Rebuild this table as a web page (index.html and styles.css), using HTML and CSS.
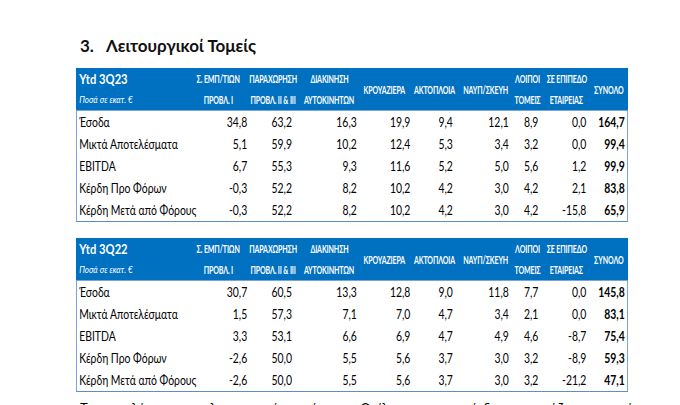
FILE: index.html
```html
<!DOCTYPE html>
<html lang="el">
<head>
<meta charset="utf-8">
<title>Λειτουργικοί Τομείς</title>
<link rel="stylesheet" href="styles.css">
</head>
<body>
<div class="page">
  <h2 class="title"><span class="num">3.</span>Λειτουργικοί Τομείς</h2>

  <div class="tbl">
    <div class="hdr">
      <div class="h first"><span class="ytd">Ytd 3Q23</span><span class="unit">Ποσά σε εκατ. €</span></div>
      <div class="h"><span class="c">Σ. ΕΜΠ/ΤΙΩΝ</span><span class="c">ΠΡΟΒΛ. Ι</span></div>
      <div class="h"><span class="c">ΠΑΡΑΧΩΡΗΣΗ</span><span class="c">ΠΡΟΒΛ. ΙΙ &amp; ΙΙΙ</span></div>
      <div class="h"><span class="c">ΔΙΑΚΙΝΗΣΗ</span><span class="c">ΑΥΤΟΚΙΝΗΤΩΝ</span></div>
      <div class="h"><span class="c">ΚΡΟΥΑΖΙΕΡΑ</span></div>
      <div class="h"><span class="c">ΑΚΤΟΠΛΟΙΑ</span></div>
      <div class="h"><span class="c">ΝΑΥΠ/ΣΚΕΥΗ</span></div>
      <div class="h"><span class="c">ΛΟΙΠΟΙ</span><span class="c">ΤΟΜΕΙΣ</span></div>
      <div class="h"><span class="c">ΣΕ ΕΠΙΠΕΔΟ</span><span class="c">ΕΤΑΙΡΕΙΑΣ</span></div>
      <div class="h"><span class="c">ΣΥΝΟΛΟ</span></div>
    </div>
    <div class="body">
      <div class="row"><div class="lbl">Έσοδα</div><div>34,8</div><div>63,2</div><div>16,3</div><div>19,9</div><div>9,4</div><div>12,1</div><div>8,9</div><div>0,0</div><div class="tot">164,7</div></div>
      <div class="row"><div class="lbl">Μικτά Αποτελέσματα</div><div>5,1</div><div>59,9</div><div>10,2</div><div>12,4</div><div>5,3</div><div>3,4</div><div>3,2</div><div>0,0</div><div class="tot">99,4</div></div>
      <div class="row"><div class="lbl">EBITDA</div><div>6,7</div><div>55,3</div><div>9,3</div><div>11,6</div><div>5,2</div><div>5,0</div><div>5,6</div><div>1,2</div><div class="tot">99,9</div></div>
      <div class="row"><div class="lbl">Κέρδη Προ Φόρων</div><div>-0,3</div><div>52,2</div><div>8,2</div><div>10,2</div><div>4,2</div><div>3,0</div><div>4,2</div><div>2,1</div><div class="tot">83,8</div></div>
      <div class="row"><div class="lbl">Κέρδη Μετά από Φόρους</div><div>-0,3</div><div>52,2</div><div>8,2</div><div>10,2</div><div>4,2</div><div>3,0</div><div>4,2</div><div>-15,8</div><div class="tot">65,9</div></div>
    </div>
  </div>

  <div class="tbl second">
    <div class="hdr">
      <div class="h first"><span class="ytd">Ytd 3Q22</span><span class="unit">Ποσά σε εκατ. €</span></div>
      <div class="h"><span class="c">Σ. ΕΜΠ/ΤΙΩΝ</span><span class="c">ΠΡΟΒΛ. Ι</span></div>
      <div class="h"><span class="c">ΠΑΡΑΧΩΡΗΣΗ</span><span class="c">ΠΡΟΒΛ. ΙΙ &amp; ΙΙΙ</span></div>
      <div class="h"><span class="c">ΔΙΑΚΙΝΗΣΗ</span><span class="c">ΑΥΤΟΚΙΝΗΤΩΝ</span></div>
      <div class="h"><span class="c">ΚΡΟΥΑΖΙΕΡΑ</span></div>
      <div class="h"><span class="c">ΑΚΤΟΠΛΟΙΑ</span></div>
      <div class="h"><span class="c">ΝΑΥΠ/ΣΚΕΥΗ</span></div>
      <div class="h"><span class="c">ΛΟΙΠΟΙ</span><span class="c">ΤΟΜΕΙΣ</span></div>
      <div class="h"><span class="c">ΣΕ ΕΠΙΠΕΔΟ</span><span class="c">ΕΤΑΙΡΕΙΑΣ</span></div>
      <div class="h"><span class="c">ΣΥΝΟΛΟ</span></div>
    </div>
    <div class="body">
      <div class="row"><div class="lbl">Έσοδα</div><div>30,7</div><div>60,5</div><div>13,3</div><div>12,8</div><div>9,0</div><div>11,8</div><div>7,7</div><div>0,0</div><div class="tot">145,8</div></div>
      <div class="row"><div class="lbl">Μικτά Αποτελέσματα</div><div>1,5</div><div>57,3</div><div>7,1</div><div>7,0</div><div>4,7</div><div>3,4</div><div>2,1</div><div>0,0</div><div class="tot">83,1</div></div>
      <div class="row"><div class="lbl">EBITDA</div><div>3,3</div><div>53,1</div><div>6,6</div><div>6,9</div><div>4,7</div><div>4,9</div><div>4,6</div><div>-8,7</div><div class="tot">75,4</div></div>
      <div class="row"><div class="lbl">Κέρδη Προ Φόρων</div><div>-2,6</div><div>50,0</div><div>5,5</div><div>5,6</div><div>3,7</div><div>3,0</div><div>3,2</div><div>-8,9</div><div class="tot">59,3</div></div>
      <div class="row"><div class="lbl">Κέρδη Μετά από Φόρους</div><div>-2,6</div><div>50,0</div><div>5,5</div><div>5,6</div><div>3,7</div><div>3,0</div><div>3,2</div><div>-21,2</div><div class="tot">47,1</div></div>
    </div>
  </div>

  <p class="note">Τα αποτελέσματα των λειτουργικών τομέων του Ομίλου για την περίοδο παρουσιάζονται ανωτέρω.</p>
</div>
</body>
</html>
```

FILE: styles.css
```css
html, body {
  margin: 0;
  padding: 0;
  background: #ffffff;
}

body {
  width: 680px;
  height: 405px;
  overflow: hidden;
  font-family: Lato, "Open Sans", "Liberation Sans", sans-serif;
  color: #000000;
}

.page {
  padding: 36px 0 0 76px;
}

.title {
  margin: 0 0 12px 4px;
  font-family: Lato, "Open Sans", "Liberation Sans", sans-serif;
  font-size: 17px;
  font-weight: bold;
  line-height: 20px;
  color: #111111;
}

.title .num {
  display: inline-block;
  width: 26px;
}

/* the table is a horizontally compressed picture in the source document */
.tbl {
  width: 690px;
  transform: scaleX(0.8);
  transform-origin: 0 0;
}

.tbl.second {
  margin-top: 16px;
}

.hdr,
.row {
  display: grid;
  grid-template-columns: 142px 72px 65px 75px 63px 63px 65px 38px 60px 47px;
}

.hdr {
  background: #0070c0;
  color: #ffffff;
  height: 42px;
}

.h {
  display: flex;
  flex-direction: column;
  justify-content: center;
  align-items: center;
  font-size: 11px;
  font-weight: bold;
  line-height: 21px;
  white-space: nowrap;
}

.h .c {
  display: inline-block;
  transform: scaleX(0.8);
  letter-spacing: -0.2px;
}

.h.first {
  align-items: flex-start;
  padding-left: 4px;
}

.h .ytd {
  font-size: 14px;
  font-weight: bold;
}

.h .unit {
  font-size: 10px;
  font-weight: normal;
  font-style: italic;
}

.body {
  border: 1px solid #5a8fc9;
  border-top: 1px solid #7aa6d6;
}

.row {
  height: 22px;
  line-height: 22px;
  font-size: 13px;
}

.row > div {
  text-align: right;
  white-space: nowrap;
}

.row > .lbl {
  text-align: left;
  padding-left: 3px;
}

.row > div:nth-child(2) { padding-right: 1px; }
.row > div:nth-child(3) { padding-right: 10px; }
.row > div:nth-child(4) { padding-right: 4px; }
.row > div:nth-child(5) { padding-right: 0; }
.row > div:nth-child(6) { padding-right: 10px; }
.row > div:nth-child(7) { padding-right: 5px; }
.row > div:nth-child(8) { padding-right: 6px; }
.row > div:nth-child(9) { padding-right: 6px; }
.row > div:nth-child(10) { padding-right: 5px; }

.row > .tot {
  font-weight: bold;
}

.note {
  margin: 7px 0 0 4px;
  font-size: 13px;
  line-height: 18px;
}
```
